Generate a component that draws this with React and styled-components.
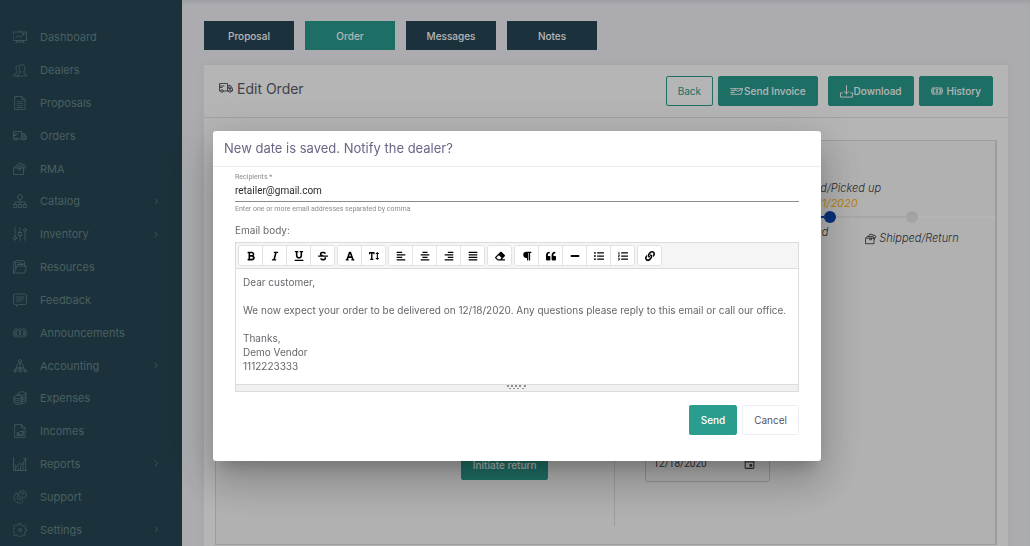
import React, { useState } from "react";
import styled, { createGlobalStyle, css } from "styled-components";
import {
  FaBold,
  FaItalic,
  FaUnderline,
  FaStrikethrough,
  FaFont,
  FaTextHeight,
  FaAlignLeft,
  FaAlignCenter,
  FaAlignRight,
  FaAlignJustify,
  FaEraser,
  FaParagraph,
  FaQuoteLeft,
  FaMinus,
  FaListUl,
  FaListOl,
  FaLink,
} from "react-icons/fa";
import { MdOutlineEvent } from "react-icons/md";

//design
const GlobalStyle = createGlobalStyle`
  * {
    box-sizing: border-box;
  }
  body {
    margin: 0;
    overflow: hidden;
    background: #f2f3f8;
    font-family: Inter, "Liberation Sans", sans-serif;
    font-size: 11px;
    color: #646c9a;
  }
  button, input, textarea {
    font-family: inherit;
  }
`;

const Shell = styled.div`
  display: grid;
  grid-template-columns: 182px 1fr;
  grid-template-rows: minmax(0, 1fr);
  height: 100vh;
`;

const Sidebar = styled.nav`
  background: #264653;
  padding-top: 21px;
`;

const Menu = styled.ul`
  display: flex;
  flex-direction: column;
  height: 100%;
  margin: 0;
  padding: 0;
  list-style: none;
`;

const MenuItem = styled.li`
  display: flex;
  flex: 1;
`;

const MenuLink = styled.a`
  display: flex;
  flex: 1;
  align-items: center;
  gap: 13px;
  padding: 0 22px 0 13px;
  color: #668789;
  text-decoration: none;
  font-size: 11px;

  span {
    flex: 1;
  }
`;

const Icon = styled.svg`
  width: ${(p) => p.$size || 14}px;
  height: ${(p) => p.$size || 14}px;
  flex: none;
  fill: none;
  stroke: currentColor;
  stroke-width: ${(p) => p.$weight || 1.5};
  stroke-linecap: round;
  stroke-linejoin: round;
`;

const Main = styled.main`
  min-width: 0;
  padding: 21px 22px 0;
  box-shadow: inset 0 4px 4px -2px rgba(60, 60, 80, 0.12);
`;

const Tabs = styled.div`
  display: flex;
  gap: 11px;
  margin-bottom: 15px;
`;

const Tab = styled.button`
  width: 90px;
  height: 29px;
  padding: 0;
  border: 0;
  background: ${(p) => (p.$active ? "#2a9d8f" : "#264653")};
  color: #fff;
  font-size: 10px;
  font-weight: 500;
`;

const Card = styled.section`
  background: #fff;
  box-shadow: 0 0 10px rgba(82, 63, 105, 0.08);
`;

const CardHeader = styled.header`
  display: flex;
  align-items: center;
  justify-content: space-between;
  height: 53px;
  padding: 0 15px;
  border-bottom: 1px solid #e4e4e8;
`;

const CardTitle = styled.h1`
  display: flex;
  align-items: center;
  gap: 4px;
  margin: 0;
  padding-bottom: 6px;
  color: #5c5c66;
  font-size: 14px;
  font-weight: 400;
`;

const Actions = styled.div`
  display: flex;
  gap: 5px;
`;

const ActionGroup = styled.div`
  display: flex;
  gap: 5px;
  margin-right: 5px;
`;

const Button = styled.button`
  display: inline-flex;
  align-items: center;
  justify-content: center;
  gap: ${(p) => (p.$wideGap ? 4 : 1)}px;
  height: 30px;
  padding: 0 11px;
  border: 1px solid #2a9d8f;
  border-radius: 2px;
  background: #2a9d8f;
  color: #fff;
  font-size: 10px;
  font-weight: 500;
  white-space: nowrap;

  ${(p) =>
    p.$outline &&
    css`
      background: transparent;
      color: #2a9d8f;
      font-weight: 400;
    `}

  ${(p) =>
    p.$plain &&
    css`
      background: #fff;
      border-color: #ebedf2;
      color: #55555a;
      font-weight: 400;
    `}
`;

const CardBody = styled.div`
  padding: 22px 11px 11px;
`;

const Panel = styled.div`
  display: flex;
  flex-direction: column;
  border: 1px solid #dcdce0;
  border-right-width: 2px;
  background: #fafafa;
`;

const Steps = styled.ol`
  display: flex;
  justify-content: flex-end;
  margin: 0;
  padding: 40px 0 0;
  list-style: none;
  font-style: italic;
  font-weight: 300;
  color: #3d3d44;
`;

const Step = styled.li`
  display: grid;
  grid-template-columns: minmax(0, 1fr);
  grid-template-rows: 30px 12px auto;
  justify-items: center;
  width: 82px;
  white-space: nowrap;
  line-height: 15px;
`;

const StepHead = styled.div`
  text-align: center;

  time {
    display: block;
    color: #ffb822;
    font-weight: 400;
  }
`;

const StepTrack = styled.div`
  display: flex;
  align-items: center;
  width: 100%;

  &::before,
  &::after {
    content: "";
    flex: 1;
    height: 2px;
    background: ${(p) => (p.$done ? "#0b46ad" : "#ececef")};
  }

  &::after {
    background: ${(p) => (p.$last ? "#fff" : "#ececef")};
  }
`;

const Dot = styled.span`
  width: 12px;
  height: 12px;
  border-radius: 50%;
  background: ${(p) => (p.$done ? "#0b46ad" : "#e6e6e9")};
`;

const StepLabel = styled.div`
  display: flex;
  align-items: center;
  gap: 2px;
  padding-top: ${(p) => (p.$done ? 2 : 8)}px;
  padding-right: ${(p) => (p.$done ? 50 : 0)}px;
  align-self: start;
`;

const TrackEnd = styled.li`
  width: 42px;
  height: 2px;
  margin-top: 35px;
  background: #fff;
`;

const Details = styled.div`
  display: grid;
  grid-template-columns: 20fr 19fr;
  height: 266px;
  margin: 14px 0 18px;
`;

const DetailCell = styled.div`
  display: flex;
  align-items: flex-end;
  justify-content: ${(p) => (p.$end ? "flex-end" : "flex-start")};
  padding: ${(p) => (p.$end ? "0 66px 46px 0" : "0 0 44px 30px")};
  border-right: ${(p) => (p.$end ? "1px solid #dcdce0" : "0")};
`;

const DateField = styled.label`
  display: flex;
  align-items: center;
  width: 125px;
  height: 37px;
  padding: 0 13px 0 7px;
  border: 1px solid #cfcfd4;
  border-radius: 3px;
  color: #44444a;

  input {
    flex: 1;
    min-width: 0;
    padding: 0;
    border: 0;
    background: none;
    color: inherit;
    font-family: Roboto, sans-serif;
    font-size: 10px;
    outline: none;
  }
`;

const Backdrop = styled.div`
  position: fixed;
  inset: 0;
  display: flex;
  align-items: flex-start;
  padding: 131px 209px 0 213px;
  background: rgba(0, 0, 0, 0.29);
`;

const Dialog = styled.div`
  flex: 1;
  min-width: 0;
  background: #fff;
  border-radius: 3px;
  box-shadow: 0 11px 15px -7px rgba(0, 0, 0, 0.2),
    0 24px 38px 3px rgba(0, 0, 0, 0.14), 0 9px 46px 8px rgba(0, 0, 0, 0.12);
`;

const DialogTitle = styled.h2`
  margin: 0;
  padding: 0 11px;
  border-bottom: 1px solid #ebedf2;
  color: #6c6484;
  font-size: 13px;
  font-weight: 400;
  line-height: 35px;
`;

const DialogBody = styled.form`
  padding: 5px 22px 26px;
`;

const Field = styled.div`
  display: flex;
  flex-direction: column;
  font-family: Roboto, sans-serif;

  label,
  small {
    color: #8c8c8c;
    font-size: 7px;
    line-height: 10px;
  }

  small {
    padding-top: 2px;
  }

  input {
    height: 20px;
    padding: 0 0 2px;
    border: 0;
    border-bottom: 1px solid #8c8c8c;
    color: #2b2b2b;
    font-size: 10px;
    outline: none;
  }
`;

const BodyLabel = styled.label`
  display: block;
  padding: 9px 0 5px;
  color: #6a6a70;
  font-size: 10px;
  line-height: 14px;
`;

const Editor = styled.div`
  border: 1px solid #dcdcdc;
`;

const Toolbar = styled.div`
  display: flex;
  flex-wrap: wrap;
  gap: 2px;
  padding: 2px;
  border-bottom: 1px solid #dcdcdc;
  background: #f5f5f5;
`;

const ToolGroup = styled.div`
  display: flex;
  border: 1px solid #e2e2e2;
  border-radius: 3px;
  background: #fff;
  overflow: hidden;
`;

const Tool = styled.button`
  box-sizing: content-box;
  display: flex;
  align-items: center;
  justify-content: center;
  width: 23px;
  height: 19px;
  padding: 0;
  border: 0;
  background: #fff;
  color: #000;
  font-size: 10px;

  & + & {
    border-left: 1px solid #e2e2e2;
  }
`;

const TextArea = styled.textarea`
  display: block;
  width: 100%;
  height: 115px;
  padding: 6px 7px;
  border: 0;
  color: #66666c;
  font-size: 10px;
  line-height: 14px;
  resize: none;
  outline: none;
`;

const ResizeBar = styled.div`
  display: flex;
  justify-content: center;
  height: 7px;
  border-top: 1px solid #dcdcdc;
  background: #f0f0f0;

  svg {
    width: 20px;
    height: 5px;
    fill: #8d8d92;
  }
`;

const DialogFooter = styled.div`
  display: flex;
  justify-content: flex-end;
  gap: 5px;
  padding-top: 13px;
`;

//icons
const truck = (
  <>
    <path d="M3 20H1V5h16v15H9M17 9h6l4 6v5h-2M17 20h2M1 10h9M1 13h5M20 12h3l2 3h-5z" />
    <circle cx="6" cy="20" r="2.6" />
    <circle cx="22" cy="20" r="2.6" />
  </>
);

const returnBox = (
  <>
    <path d="M2 12l3-4h13l3 4v13H2zM2 12h19M8 8l3-5h6l3 4M11 12v4h4v-4" />
    <path d="M20 5a4 4 0 1 1 2 8M22 11l-2 2 2 2" />
  </>
);

const coin = (
  <>
    <circle cx="14" cy="14" r="8" />
    <path d="M14 9v10M16 10.500c-4-1-5 3-2 3.500s3 4-2 3.500M4 6c-4 5-4 11 0 16M24 6c4 5 4 11 0 16M7 5c-4 5-4 13 0 18M21 5c4 5 4 13 0 18" />
  </>
);

const menu = [
  {
    name: "Dashboard",
    icon: (
      <>
        <path d="M1 4h26v17H1zM14 1v3M8 21l-2 5M20 21l2 5M7 24h14M5 16l5-5 4 4 8-8M19 7h3v3" />
      </>
    ),
  },
  {
    name: "Dealers",
    icon: (
      <>
        <path d="M9 26h18c0-5-6-5-6-8 4-5 4-14-3-15-7 1-7 10-3 15 0 3-6 3-6 8z" />
        <path d="M12 5C6 3 4 11 8 18c0 3-7 3-7 8h8" />
      </>
    ),
  },
  {
    name: "Proposals",
    icon: (
      <path d="M4 1h14l6 6v20H4zM18 1v6h6M8 11c2-2 3 1 5 0s3 0 6 0M8 15c2-2 3 1 5 0s3 0 6 0M8 19c2-2 3 1 5 0s3 0 6 0M8 23h11" />
    ),
  },
  { name: "Orders", icon: truck },
  { name: "RMA", icon: returnBox },
  {
    name: "Catalog",
    sub: true,
    icon: (
      <>
        <circle cx="14" cy="6" r="5" />
        <path d="M14 11v10M4 21v-5h20v5M1 21h6v6H1zM11 21h6v6h-6zM21 21h6v6h-6z" />
      </>
    ),
  },
  {
    name: "Inventory",
    sub: true,
    icon: (
      <>
        <path d="M4 1v18M4 25v2M14 1v10M14 17v10M24 9v18M11 11h6v6h-6z" />
        <circle cx="4" cy="22" r="3" />
        <circle cx="24" cy="6" r="3" />
      </>
    ),
  },
  {
    name: "Resources",
    icon: (
      <path d="M1 26V4h4l1-3h15l2 4v7M1 26h22l4-14H8l-3 8-4 6M5 4v13M8 5h6l2 3h7M8 9h12" />
    ),
  },
  {
    name: "Feedback",
    icon: <path d="M3 2h22l2 2v17l-2 2H11l-4 4v-4H3l-2-2V4zM6 8h16M6 12h16M6 16h12" />,
  },
  { name: "Announcements", icon: coin },
  {
    name: "Accounting",
    sub: true,
    icon: (
      <>
        <circle cx="14" cy="4" r="3" />
        <path d="M7 17c0-5 3-9 7-9s7 4 7 9zM14 9v8M14 17v3M4 22v-2h20v2" />
        <circle cx="4" cy="24" r="2.500" />
        <circle cx="14" cy="24" r="2.500" />
        <circle cx="24" cy="24" r="2.500" />
      </>
    ),
  },
  {
    name: "Expenses",
    icon: (
      <>
        <ellipse cx="18" cy="5" rx="8" ry="3.500" />
        <path d="M10 5v4M26 5v17c-1 3-5 4-9 4M26 10c-1 3-5 3-8 3M26 14c-1 3-5 3-8 3M26 18c-1 3-5 3-8 3" />
        <ellipse cx="10" cy="12" rx="8" ry="3.500" />
        <path d="M2 12v11c2 5 14 5 16 0V12M2 16c2 5 14 5 16 0M2 20c2 5 14 5 16 0" />
      </>
    ),
  },
  {
    name: "Incomes",
    icon: (
      <path d="M4 1h13l7 7v19H4zM17 1v7h7M8 23v-6h3v6M11 20h4v3M8 23h12v-9M17 16l3-3M14 15h6v8" />
    ),
  },
  {
    name: "Reports",
    sub: true,
    icon: (
      <path d="M1 1v26h26M5 27v-8M10 27v-5M15 27v-9M20 27V13M25 27V8M3 16l5 3 5-6 5 2 8-12M22 3h4v4" />
    ),
  },
  {
    name: "Support",
    icon: (
      <>
        <path d="M3 11c-5 8 6 18 14 15l3-3-5-5-3 2c-2-1-4-4-4-6l2-3-3-5z" />
        <circle cx="19" cy="9" r="7.500" />
        <path d="M17 7c0-3 5-2 4 0l-2 2.500M19 13v.5" />
      </>
    ),
  },
  {
    name: "Settings",
    sub: true,
    icon: (
      <>
        <circle cx="14" cy="14" r="3" />
        <path d="M12 1h4l1 4 3 1 3-2 3 3-2 3 1 3 2 0v3l-3 1-1 3 2 3-3 3-3-2-3 1-1 3h-4l-1-3-3-1-3 2-3-3 2-3-1-3-3-1v-3l3-1 1-3-2-3 3-3 3 2 3-1z" />
      </>
    ),
  },
];

const tools = [
  [
    ["Bold", FaBold],
    ["Italic", FaItalic],
    ["Underline", FaUnderline],
    ["Strikethrough", FaStrikethrough],
  ],
  [
    ["Font color", FaFont],
    ["Font size", FaTextHeight],
  ],
  [
    ["Align left", FaAlignLeft],
    ["Align center", FaAlignCenter],
    ["Align right", FaAlignRight],
    ["Justify", FaAlignJustify],
  ],
  [["Remove format", FaEraser]],
  [
    ["Paragraph", FaParagraph],
    ["Quote", FaQuoteLeft],
    ["Horizontal line", FaMinus],
    ["Bulleted list", FaListUl],
    ["Numbered list", FaListOl],
  ],
  [["Link", FaLink]],
];

const message = `Dear customer,

We now expect your order to be delivered on 12/18/2020. Any questions please reply to this email or call our office.

Thanks,
Demo Vendor
1112223333`;

const Glyph = ({ children, size, weight }) => (
  <Icon viewBox="0 0 28 28" $size={size} $weight={weight} aria-hidden="true">
    {children}
  </Icon>
);

const NotifyDialog = ({ onClose }) => {
  let [email, setEmail] = useState("retailer@gmail.com");
  let [body, setBody] = useState(message);

  let handleSubmit = (e) => {
    e.preventDefault();
    onClose();
  };

  return (
    <Backdrop>
      <Dialog role="dialog" aria-modal="true" aria-labelledby="notify-title">
        <DialogTitle id="notify-title">
          New date is saved. Notify the dealer?
        </DialogTitle>
        <DialogBody onSubmit={handleSubmit}>
          <Field>
            <label htmlFor="recipients">Recipients *</label>
            <input
              id="recipients"
              type="text"
              value={email}
              onChange={(e) => setEmail(e.target.value)}
            />
            <small>Enter one or more email addresses separated by comma</small>
          </Field>
          <BodyLabel htmlFor="email-body">Email body:</BodyLabel>
          <Editor>
            <Toolbar>
              {tools.map((group, i) => (
                <ToolGroup key={i}>
                  {group.map(([name, ToolIcon]) => (
                    <Tool key={name} type="button" aria-label={name}>
                      <ToolIcon />
                    </Tool>
                  ))}
                </ToolGroup>
              ))}
            </Toolbar>
            <TextArea
              id="email-body"
              spellCheck={false}
              value={body}
              onChange={(e) => setBody(e.target.value)}
            />
            <ResizeBar>
              <svg viewBox="0 0 20 5" aria-hidden="true">
                <path d="M0 0h2v2H0zM4 0h2v2H4zM8 0h2v2H8zM12 0h2v2h-2zM17 0h2v2h-2zM2 3h2v1H2zM6 3h2v1H6zM10 3h2v1h-2zM15 3h2v1h-2z" />
              </svg>
            </ResizeBar>
          </Editor>
          <DialogFooter>
            <Button type="submit">Send</Button>
            <Button type="button" $plain onClick={onClose}>
              Cancel
            </Button>
          </DialogFooter>
        </DialogBody>
      </Dialog>
    </Backdrop>
  );
};

const App = () => {
  let [tab, setTab] = useState("Order");
  let [open, setOpen] = useState(true);
  let [date, setDate] = useState("12/18/2020");

  return (
    <>
      <GlobalStyle />
      <Shell>
        <Sidebar>
          <Menu>
            {menu.map((item) => (
              <MenuItem key={item.name}>
                <MenuLink href="#">
                  <Glyph weight={1.4}>{item.icon}</Glyph>
                  <span>{item.name}</span>
                  {item.sub && (
                    <Glyph size={7} weight={3}>
                      <path d="M9 5l9 9-9 9" />
                    </Glyph>
                  )}
                </MenuLink>
              </MenuItem>
            ))}
          </Menu>
        </Sidebar>
        <Main>
          <Tabs>
            {["Proposal", "Order", "Messages", "Notes"].map((name) => (
              <Tab
                key={name}
                $active={name === tab}
                onClick={() => setTab(name)}
              >
                {name}
              </Tab>
            ))}
          </Tabs>
          <Card>
            <CardHeader>
              <CardTitle>
                <Glyph weight={2}>{truck}</Glyph>
                Edit Order
              </CardTitle>
              <Actions>
                <ActionGroup>
                  <Button $outline>Back</Button>
                  <Button>
                    <Glyph size={13} weight={2}>
                      <path d="M10 8h17l-3 12H7M10 8l6 6 11-6M1 8h9M3 12h8M1 16h8M2 20h5" />
                    </Glyph>
                    Send Invoice
                  </Button>
                </ActionGroup>
                <Button>
                  <Glyph size={13} weight={2}>
                    <path d="M5 17H1v9h26v-9h-4M14 1v18M9 14l5 5 5-5" />
                  </Glyph>
                  Download
                </Button>
                <Button $wideGap onClick={() => setOpen(true)}>
                  <Glyph size={12} weight={2}>
                    {coin}
                  </Glyph>
                  History
                </Button>
              </Actions>
            </CardHeader>
            <CardBody>
              <Panel>
                <Steps>
                  <Step>
                    <StepHead>
                      Delivered/Picked up
                      <time>12/11/2020</time>
                    </StepHead>
                    <StepTrack $done>
                      <Dot $done />
                    </StepTrack>
                    <StepLabel $done>Received</StepLabel>
                  </Step>
                  <Step>
                    <StepHead />
                    <StepTrack $last>
                      <Dot />
                    </StepTrack>
                    <StepLabel>
                      <Glyph size={12} weight={2}>
                        {returnBox}
                      </Glyph>
                      Shipped/Return
                    </StepLabel>
                  </Step>
                  <TrackEnd aria-hidden="true" />
                </Steps>
                <Details>
                  <DetailCell $end>
                    <Button>Initiate return</Button>
                  </DetailCell>
                  <DetailCell>
                    <DateField>
                      <input
                        aria-label="Delivery date"
                        type="text"
                        value={date}
                        onChange={(e) => setDate(e.target.value)}
                      />
                      <MdOutlineEvent size={13} />
                    </DateField>
                  </DetailCell>
                </Details>
              </Panel>
            </CardBody>
          </Card>
        </Main>
      </Shell>
      {open && <NotifyDialog onClose={() => setOpen(false)} />}
    </>
  );
};

export default App;
